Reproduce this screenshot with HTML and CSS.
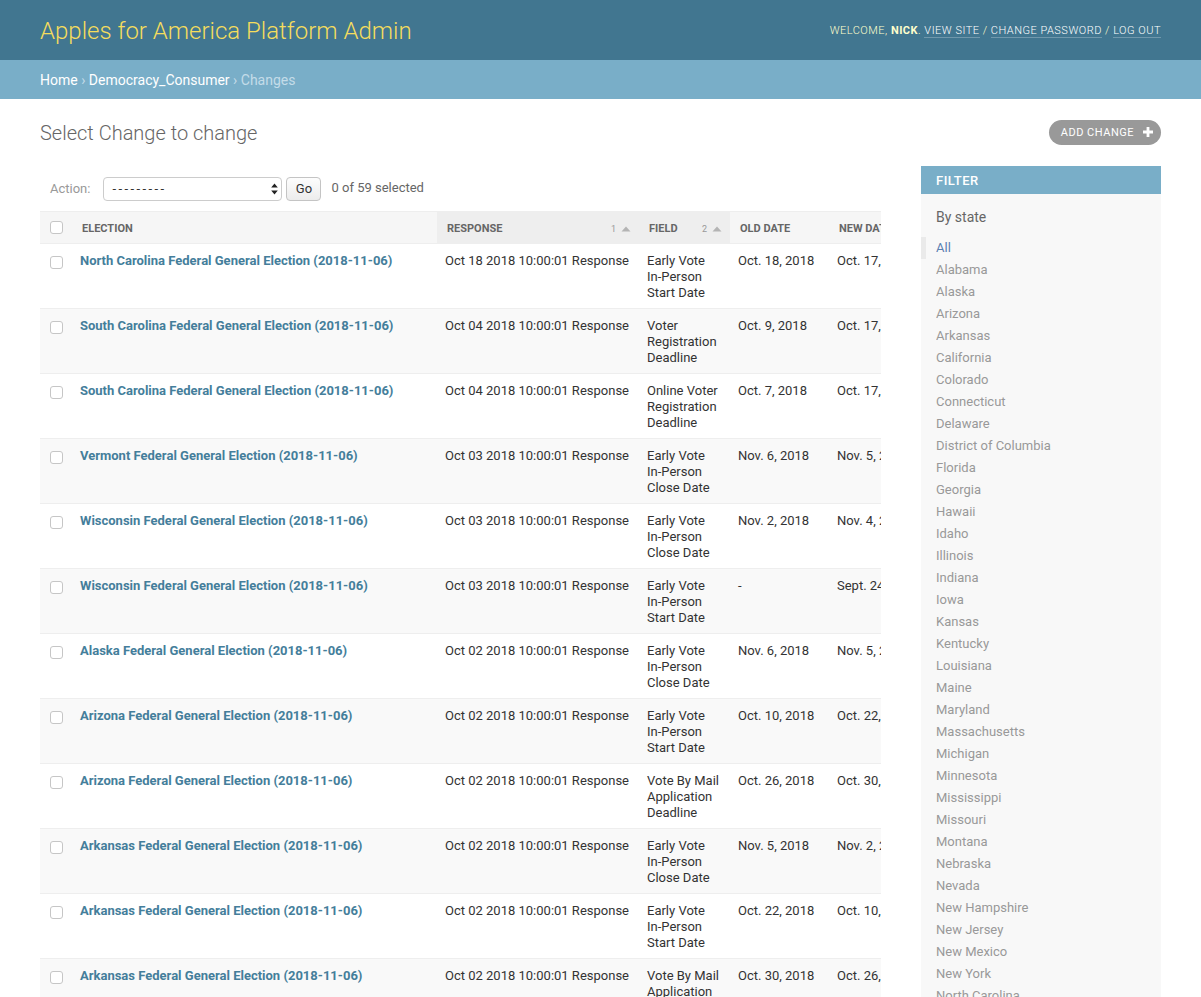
FILE: index.html
```html
<!DOCTYPE html>
<html lang="en">
<head>
<meta charset="utf-8">
<title>Select Change to change</title>
<link rel="stylesheet" href="styles.css">
</head>
<body>
<header class="header">
  <h1 class="branding">Apples for America Platform Admin</h1>
  <div class="user-tools">Welcome, <strong>Nick</strong>. <a href="#">View site</a> / <a href="#">Change password</a> / <a href="#">Log out</a></div>
</header>
<nav class="breadcrumbs"><a href="#">Home</a> › <a href="#">Democracy_Consumer</a> › Changes</nav>
<main class="content">
  <div class="title-row">
    <h1>Select Change to change</h1>
    <a class="addlink" href="#">Add change <svg width="10" height="10" viewBox="0 0 10 10"><path d="M3.6 0h2.8v3.6H10v2.8H6.4V10H3.6V6.4H0V3.6h3.6z" fill="#fff"/></svg></a>
  </div>
  <div class="changelist">
    <div class="results-col">
      <div class="actions">
        <label class="action-label">Action:</label>
        <span class="select-wrap">
          <select class="action-select"><option>---------</option></select>
          <svg class="select-arrows" width="7" height="12" viewBox="0 0 7 12"><path d="M3.5 0.5L6.8 4.6H0.2z M3.5 11.5L0.2 7.4H6.8z" fill="#222"/></svg>
        </span>
        <button class="go-btn" type="button">Go</button>
        <span class="counter">0 of 59 selected</span>
      </div>
      <div class="results">
        <table class="result-list">
          <colgroup>
            <col class="c-check"><col class="c-election"><col class="c-response"><col class="c-field"><col class="c-old"><col class="c-new">
          </colgroup>
          <thead>
            <tr>
              <th class="check-col"><input type="checkbox" class="cb"></th>
              <th>Election</th>
              <th class="sorted"><div class="th-inner"><span>Response</span><span class="sortinfo">1 <svg width="10" height="6" viewBox="0 0 10 6"><path d="M5 0.5L9.5 5.5H0.5z" fill="#b4b4b4"/></svg></span></div></th>
              <th class="sorted"><div class="th-inner"><span>Field</span><span class="sortinfo">2 <svg width="10" height="6" viewBox="0 0 10 6"><path d="M5 0.5L9.5 5.5H0.5z" fill="#b4b4b4"/></svg></span></div></th>
              <th>Old date</th>
              <th>New date</th>
            </tr>
          </thead>
          <tbody>
            <tr class="row1"><td class="check-col"><input type="checkbox" class="cb"></td><td class="el"><a href="#">North Carolina Federal General Election (2018-11-06)</a></td><td class="nw">Oct 18 2018 10:00:01 Response</td><td>Early Vote<br>In-Person<br>Start Date</td><td class="nw">Oct. 18, 2018</td><td class="nw">Oct. 17, 2018</td></tr>
            <tr class="row2"><td class="check-col"><input type="checkbox" class="cb"></td><td class="el"><a href="#">South Carolina Federal General Election (2018-11-06)</a></td><td class="nw">Oct 04 2018 10:00:01 Response</td><td>Voter<br>Registration<br>Deadline</td><td class="nw">Oct. 9, 2018</td><td class="nw">Oct. 17, 2018</td></tr>
            <tr class="row1"><td class="check-col"><input type="checkbox" class="cb"></td><td class="el"><a href="#">South Carolina Federal General Election (2018-11-06)</a></td><td class="nw">Oct 04 2018 10:00:01 Response</td><td>Online Voter<br>Registration<br>Deadline</td><td class="nw">Oct. 7, 2018</td><td class="nw">Oct. 17, 2018</td></tr>
            <tr class="row2"><td class="check-col"><input type="checkbox" class="cb"></td><td class="el"><a href="#">Vermont Federal General Election (2018-11-06)</a></td><td class="nw">Oct 03 2018 10:00:01 Response</td><td>Early Vote<br>In-Person<br>Close Date</td><td class="nw">Nov. 6, 2018</td><td class="nw">Nov. 5, 2018</td></tr>
            <tr class="row1"><td class="check-col"><input type="checkbox" class="cb"></td><td class="el"><a href="#">Wisconsin Federal General Election (2018-11-06)</a></td><td class="nw">Oct 03 2018 10:00:01 Response</td><td>Early Vote<br>In-Person<br>Close Date</td><td class="nw">Nov. 2, 2018</td><td class="nw">Nov. 4, 2018</td></tr>
            <tr class="row2"><td class="check-col"><input type="checkbox" class="cb"></td><td class="el"><a href="#">Wisconsin Federal General Election (2018-11-06)</a></td><td class="nw">Oct 03 2018 10:00:01 Response</td><td>Early Vote<br>In-Person<br>Start Date</td><td class="nw">-</td><td class="nw">Sept. 24, 2018</td></tr>
            <tr class="row1"><td class="check-col"><input type="checkbox" class="cb"></td><td class="el"><a href="#">Alaska Federal General Election (2018-11-06)</a></td><td class="nw">Oct 02 2018 10:00:01 Response</td><td>Early Vote<br>In-Person<br>Close Date</td><td class="nw">Nov. 6, 2018</td><td class="nw">Nov. 5, 2018</td></tr>
            <tr class="row2"><td class="check-col"><input type="checkbox" class="cb"></td><td class="el"><a href="#">Arizona Federal General Election (2018-11-06)</a></td><td class="nw">Oct 02 2018 10:00:01 Response</td><td>Early Vote<br>In-Person<br>Start Date</td><td class="nw">Oct. 10, 2018</td><td class="nw">Oct. 22, 2018</td></tr>
            <tr class="row1"><td class="check-col"><input type="checkbox" class="cb"></td><td class="el"><a href="#">Arizona Federal General Election (2018-11-06)</a></td><td class="nw">Oct 02 2018 10:00:01 Response</td><td>Vote By Mail<br>Application<br>Deadline</td><td class="nw">Oct. 26, 2018</td><td class="nw">Oct. 30, 2018</td></tr>
            <tr class="row2"><td class="check-col"><input type="checkbox" class="cb"></td><td class="el"><a href="#">Arkansas Federal General Election (2018-11-06)</a></td><td class="nw">Oct 02 2018 10:00:01 Response</td><td>Early Vote<br>In-Person<br>Close Date</td><td class="nw">Nov. 5, 2018</td><td class="nw">Nov. 2, 2018</td></tr>
            <tr class="row1"><td class="check-col"><input type="checkbox" class="cb"></td><td class="el"><a href="#">Arkansas Federal General Election (2018-11-06)</a></td><td class="nw">Oct 02 2018 10:00:01 Response</td><td>Early Vote<br>In-Person<br>Start Date</td><td class="nw">Oct. 22, 2018</td><td class="nw">Oct. 10, 2018</td></tr>
            <tr class="row2"><td class="check-col"><input type="checkbox" class="cb"></td><td class="el"><a href="#">Arkansas Federal General Election (2018-11-06)</a></td><td class="nw">Oct 02 2018 10:00:01 Response</td><td>Vote By Mail<br>Application<br>Deadline</td><td class="nw">Oct. 30, 2018</td><td class="nw">Oct. 26, 2018</td></tr>
          </tbody>
        </table>
      </div>
    </div>
    <aside class="filter">
      <h2>Filter</h2>
      <h3>By state</h3>
      <ul>
        <li class="selected"><a href="#">All</a></li>
        <li><a href="#">Alabama</a></li>
        <li><a href="#">Alaska</a></li>
        <li><a href="#">Arizona</a></li>
        <li><a href="#">Arkansas</a></li>
        <li><a href="#">California</a></li>
        <li><a href="#">Colorado</a></li>
        <li><a href="#">Connecticut</a></li>
        <li><a href="#">Delaware</a></li>
        <li><a href="#">District of Columbia</a></li>
        <li><a href="#">Florida</a></li>
        <li><a href="#">Georgia</a></li>
        <li><a href="#">Hawaii</a></li>
        <li><a href="#">Idaho</a></li>
        <li><a href="#">Illinois</a></li>
        <li><a href="#">Indiana</a></li>
        <li><a href="#">Iowa</a></li>
        <li><a href="#">Kansas</a></li>
        <li><a href="#">Kentucky</a></li>
        <li><a href="#">Louisiana</a></li>
        <li><a href="#">Maine</a></li>
        <li><a href="#">Maryland</a></li>
        <li><a href="#">Massachusetts</a></li>
        <li><a href="#">Michigan</a></li>
        <li><a href="#">Minnesota</a></li>
        <li><a href="#">Mississippi</a></li>
        <li><a href="#">Missouri</a></li>
        <li><a href="#">Montana</a></li>
        <li><a href="#">Nebraska</a></li>
        <li><a href="#">Nevada</a></li>
        <li><a href="#">New Hampshire</a></li>
        <li><a href="#">New Jersey</a></li>
        <li><a href="#">New Mexico</a></li>
        <li><a href="#">New York</a></li>
        <li><a href="#">North Carolina</a></li>
        <li><a href="#">North Dakota</a></li>
        <li><a href="#">Ohio</a></li>
        <li><a href="#">Oklahoma</a></li>
        <li><a href="#">Oregon</a></li>
        <li><a href="#">Pennsylvania</a></li>
        <li><a href="#">Rhode Island</a></li>
        <li><a href="#">South Carolina</a></li>
        <li><a href="#">South Dakota</a></li>
        <li><a href="#">Tennessee</a></li>
        <li><a href="#">Texas</a></li>
        <li><a href="#">Utah</a></li>
        <li><a href="#">Vermont</a></li>
        <li><a href="#">Virginia</a></li>
        <li><a href="#">Washington</a></li>
        <li><a href="#">West Virginia</a></li>
        <li><a href="#">Wisconsin</a></li>
        <li><a href="#">Wyoming</a></li>
      </ul>
    </aside>
  </div>
</main>
</body>
</html>
```

FILE: styles.css
```css
* { box-sizing: border-box; }
body {
  margin: 0;
  font-family: Roboto, "Liberation Sans", sans-serif;
  font-size: 14px;
  color: #333;
  background: #fff;
}
a { text-decoration: none; }

.header {
  height: 60px;
  padding: 0 40px;
  background: #417690;
  display: flex;
  align-items: center;
  justify-content: space-between;
  color: #ffc;
}
.branding {
  margin: 0;
  padding-top: 2px;
  font-size: 24px;
  font-weight: 300;
  color: #f5dd5d;
}
.user-tools {
  font-size: 11px;
  font-weight: 300;
  letter-spacing: 0.5px;
  text-transform: uppercase;
  color: #ffc;
}
.user-tools strong { font-weight: 700; }
.user-tools a {
  color: #fff;
  border-bottom: 1px solid rgba(255, 255, 255, 0.25);
}

.breadcrumbs {
  background: #79aec8;
  padding: 11px 40px 10px;
  font-size: 14px;
  line-height: 18px;
  color: #c4dce8;
}
.breadcrumbs a { color: #fff; }

.content { padding: 19px 40px 20px; }
.title-row {
  height: 28px;
  display: flex;
  align-items: center;
  justify-content: space-between;
  margin-bottom: 20px;
}
.title-row h1 {
  margin: 0;
  padding-top: 2px;
  font-size: 20px;
  font-weight: 300;
  color: #666;
}
.addlink {
  display: flex;
  align-items: center;
  gap: 9px;
  height: 25px;
  padding: 0 8px 0 12px;
  background: #999;
  border-radius: 15px;
  color: #fff;
  font-size: 11px;
  letter-spacing: 0.5px;
  text-transform: uppercase;
}

.changelist {
  display: flex;
  align-items: flex-start;
  gap: 40px;
}
.results-col { flex: 1; min-width: 0; }

.actions {
  padding: 10px;
  height: 45px;
  display: flex;
  align-items: center;
  font-size: 13px;
  color: #999;
}
.action-label { margin-right: 13px; color: #999; }
.select-wrap { position: relative; display: block; }
.action-select {
  -webkit-appearance: none;
  appearance: none;
  display: block;
  width: 179px;
  height: 24px;
  padding: 0 20px 0 8px;
  border: 1px solid #ccc;
  border-radius: 4px;
  background: #fff;
  font-family: Roboto, "Liberation Sans", sans-serif;
  font-size: 13px;
  letter-spacing: 2.4px;
  color: #333;
}
.select-arrows {
  position: absolute;
  right: 4px;
  top: 6px;
  pointer-events: none;
}
.go-btn {
  margin-left: 4px;
  width: 35px;
  height: 24px;
  padding: 0;
  border: 1px solid #c4c4c4;
  border-radius: 4px;
  background: linear-gradient(#fdfdfd, #ececec);
  font-family: Roboto, "Liberation Sans", sans-serif;
  font-size: 13px;
  color: #333;
}
.counter { margin-left: 10px; color: #666; font-size: 13px; position: relative; top: -1px; }

.results { overflow: hidden; }
.result-list {
  border-collapse: collapse;
  table-layout: fixed;
  width: 937px;
}
.c-check { width: 32px; }
.c-election { width: 365px; }
.c-response { width: 202px; }
.c-field { width: 91px; }
.c-old { width: 99px; }
.c-new { width: 148px; }

.result-list thead th {
  background: #f6f6f6;
  color: #666;
  font-size: 11px;
  font-weight: 700;
  text-transform: uppercase;
  text-align: left;
  padding: 9px 10px 7px;
  line-height: 14px;
  height: 32px;
  border-top: 1px solid #eee;
  border-bottom: 1px solid #eee;
  white-space: nowrap;
  overflow: hidden;
  vertical-align: middle;
}
.result-list thead th.sorted { background: #eee; }
.th-inner {
  display: flex;
  justify-content: space-between;
  align-items: center;
}
.sortinfo {
  display: flex;
  align-items: center;
  gap: 5px;
  font-size: 9px;
  font-weight: 400;
  color: #999;
  margin-right: -2px;
}
.result-list thead th.check-col { padding: 0 9px 0 10px; }

.result-list tbody td {
  padding: 9px 8px 7px;
  font-size: 13px;
  line-height: 16px;
  vertical-align: top;
  border-bottom: 1px solid #eee;
  color: #333;
}
.result-list tbody td.check-col { padding: 8px 9px 8px 10px; }
.result-list tbody td.nw { white-space: nowrap; overflow: hidden; }
.result-list tbody td.el a { color: #447e9b; font-weight: 700; }
.row1 { background: #fff; }
.row2 { background: #f9f9f9; }

.cb {
  -webkit-appearance: none;
  appearance: none;
  display: block;
  width: 13px;
  height: 13px;
  margin: 0;
  border: 1px solid #c6c6c6;
  border-radius: 3px;
  background: #fff;
}
tbody .cb { margin-top: 4px; }

.filter {
  width: 240px;
  flex: none;
  background: #f8f8f8;
}
.filter h2 {
  margin: 0;
  padding: 6px 15px 4px;
  line-height: 18px;
  font-size: 13px;
  font-weight: 500;
  letter-spacing: 0.5px;
  text-transform: uppercase;
  background: #79aec8;
  color: #fff;
}
.filter h3 {
  margin: 15px 0 12px;
  padding: 0 15px;
  font-size: 14px;
  font-weight: 400;
  line-height: 16px;
  color: #666;
}
.filter ul {
  margin: 0;
  padding: 0 15px 15px;
  list-style: none;
  border-bottom: 1px solid #eaeaea;
}
.filter li {
  font-size: 13px;
  line-height: 20px;
  padding: 1px 0;
}
.filter li a {
  display: block;
  color: #999;
  white-space: nowrap;
  overflow: hidden;
  text-overflow: ellipsis;
}
.filter li.selected {
  border-left: 5px solid #eaeaea;
  padding-left: 10px;
  margin-left: -15px;
}
.filter li.selected a { color: #5b80b2; }
```
